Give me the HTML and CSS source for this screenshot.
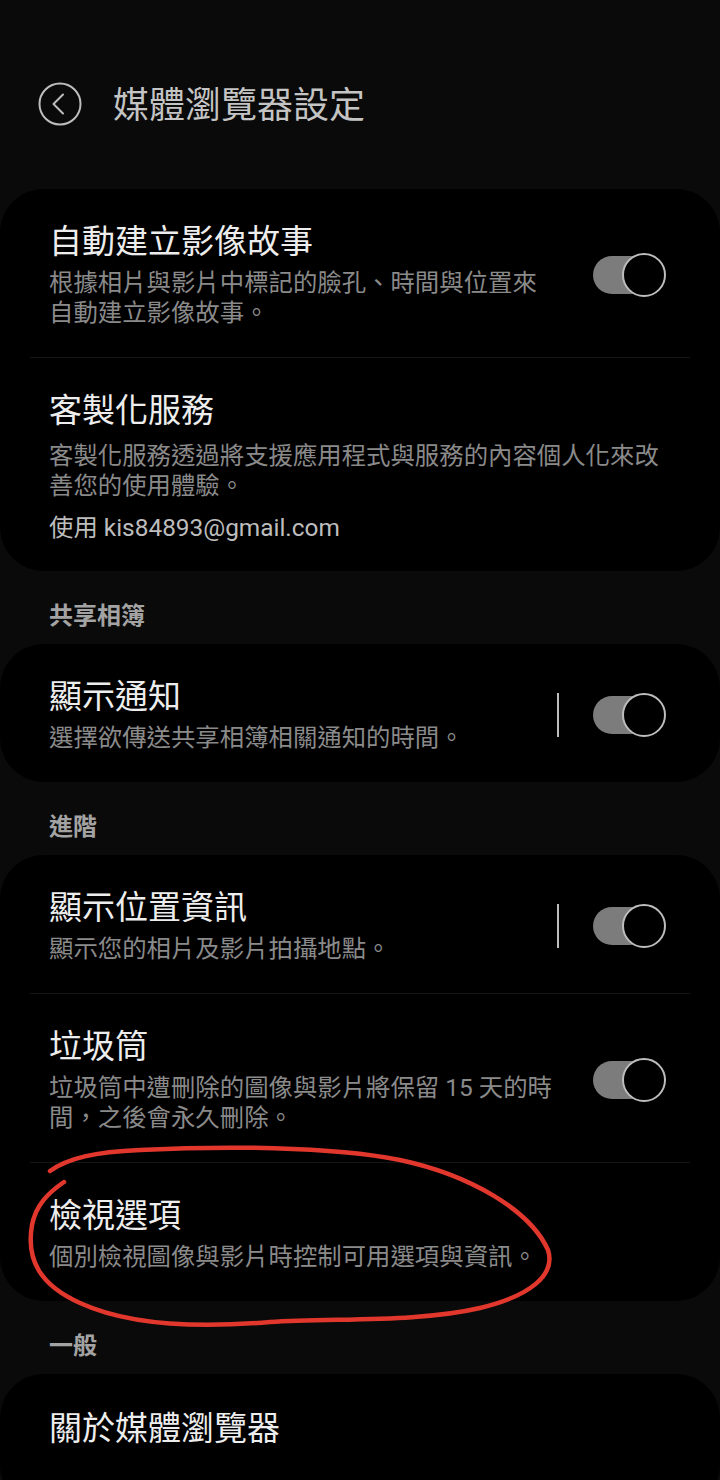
FILE: index.html
```html
<!DOCTYPE html>
<html lang="zh-Hant">
<head>
  <meta charset="UTF-8" />
  <title>媒體瀏覽器設定</title>
  <link rel="stylesheet" href="styles.css">
</head>
<body>
  <div class="page">
    <header class="topbar">
      <button class="back" aria-label="返回">
        <svg width="44" height="44" viewBox="0 0 44 44">
          <circle cx="22" cy="22" r="20.5" fill="none" stroke="#bdbdbd" stroke-width="2" />
          <path d="M25 12.5 L15.5 22 L25 31.5" fill="none" stroke="#bdbdbd" stroke-width="2" stroke-linecap="round" stroke-linejoin="round" />
        </svg>
      </button>
      <h1>媒體瀏覽器設定</h1>
    </header>

    <section class="card">
      <div class="item">
        <div class="text">
          <div class="title">自動建立影像故事</div>
          <div class="desc">根據相片與影片中標記的臉孔、時間與位置來自動建立影像故事。</div>
        </div>
        <span class="switch"></span>
      </div>
      <div class="item item-account">
        <div class="text">
          <div class="title">客製化服務</div>
          <div class="desc">客製化服務透過將支援應用程式與服務的內容個人化來改善您的使用體驗。</div>
          <div class="account">使用 kis84893@gmail.com</div>
        </div>
      </div>
    </section>

    <div class="section-label">共享相簿</div>
    <section class="card">
      <div class="item">
        <div class="text">
          <div class="title">顯示通知</div>
          <div class="desc">選擇欲傳送共享相簿相關通知的時間。</div>
        </div>
        <span class="sep"></span>
        <span class="switch"></span>
      </div>
    </section>

    <div class="section-label">進階</div>
    <section class="card">
      <div class="item">
        <div class="text">
          <div class="title">顯示位置資訊</div>
          <div class="desc">顯示您的相片及影片拍攝地點。</div>
        </div>
        <span class="sep"></span>
        <span class="switch"></span>
      </div>
      <div class="item">
        <div class="text">
          <div class="title">垃圾筒</div>
          <div class="desc">垃圾筒中遭刪除的圖像與影片將保留 15 天的時間，之後會永久刪除。</div>
        </div>
        <span class="switch"></span>
      </div>
      <div class="item">
        <div class="text">
          <div class="title">檢視選項</div>
          <div class="desc">個別檢視圖像與影片時控制可用選項與資訊。</div>
        </div>
      </div>
    </section>

    <div class="section-label">一般</div>
    <section class="card card-last">
      <div class="item">
        <div class="text">
          <div class="title">關於媒體瀏覽器</div>
        </div>
      </div>
    </section>

    <!-- hand drawn mark on the screenshot -->
    <svg class="annotation" width="720" height="1480" viewBox="0 0 720 1480">
      <path d="M50 1171 C68 1158 95 1152 140 1150 C220 1146 330 1146 400 1160 C470 1175 530 1210 548 1250 C556 1275 530 1296 480 1308 C420 1322 340 1318 270 1322 C200 1328 130 1326 80 1303 C40 1285 26 1260 32 1225 C36 1205 48 1193 64 1182" fill="none" stroke="#e2372d" stroke-width="4.5" stroke-linecap="round" />
    </svg>
  </div>
</body>
</html>
```

FILE: styles.css
```css
html, body {
  margin: 0;
  background-color: #0a0a0a;
  font-family: Roboto, "Noto Sans CJK TC", sans-serif;
  overflow: hidden;
}

.page {
  position: relative;
  width: 720px;
  height: 1480px;
}

.topbar {
  display: flex;
  align-items: center;
  padding: 82px 0 0 38px;
  margin-bottom: 63px;
}

.back {
  width: 44px;
  height: 44px;
  padding: 0;
  border: none;
  background: none;
}

.back svg {
  display: block;
}

.topbar h1 {
  margin: 0 0 0 31px;
  padding-top: 4px;
  font-size: 36px;
  font-weight: 400;
  line-height: 40px;
  color: #c4c4c4;
}

.card {
  background: #000;
  border-radius: 44px;
}

.item {
  display: flex;
  align-items: center;
  margin: 0 30px;
  padding: 33px 24px 29px 19px;
}

.item + .item {
  border-top: 1px solid #151515;
}

.text {
  flex: 1;
}

.title {
  font-size: 33px;
  line-height: 40px;
  color: #ededed;
}

.desc {
  margin-top: 6px;
  font-size: 24.4px;
  line-height: 30px;
  color: #8a8a8a;
}

.item-account {
  padding-bottom: 28px;
}

.item-account .desc {
  margin-top: 10px;
}

.account {
  margin-top: 12px;
  font-size: 24.4px;
  line-height: 30px;
  color: #bdbdbd;
}

.section-label {
  padding: 30px 49px 13px;
  font-size: 24px;
  font-weight: 700;
  line-height: 30px;
  color: #a3a3a3;
}

.sep {
  width: 2px;
  height: 44px;
  margin-left: 16px;
  background: #bdbdbd;
}

.switch {
  position: relative;
  flex: none;
  width: 73px;
  height: 44px;
  margin-left: 36px;
}

.sep + .switch {
  margin-left: 34px;
}

.switch::before {
  content: "";
  position: absolute;
  left: 0;
  top: 3px;
  width: 56px;
  height: 38px;
  border-radius: 19px;
  background: #7c7c7c;
}

.switch::after {
  content: "";
  position: absolute;
  right: 0;
  top: 0;
  width: 40px;
  height: 40px;
  border: 2px solid #bdbdbd;
  border-radius: 50%;
  background: #000;
}

.card-last .item {
  padding-top: 35px;
  padding-bottom: 60px;
}

.annotation {
  position: absolute;
  top: 0;
  left: 0;
  pointer-events: none;
}
```
